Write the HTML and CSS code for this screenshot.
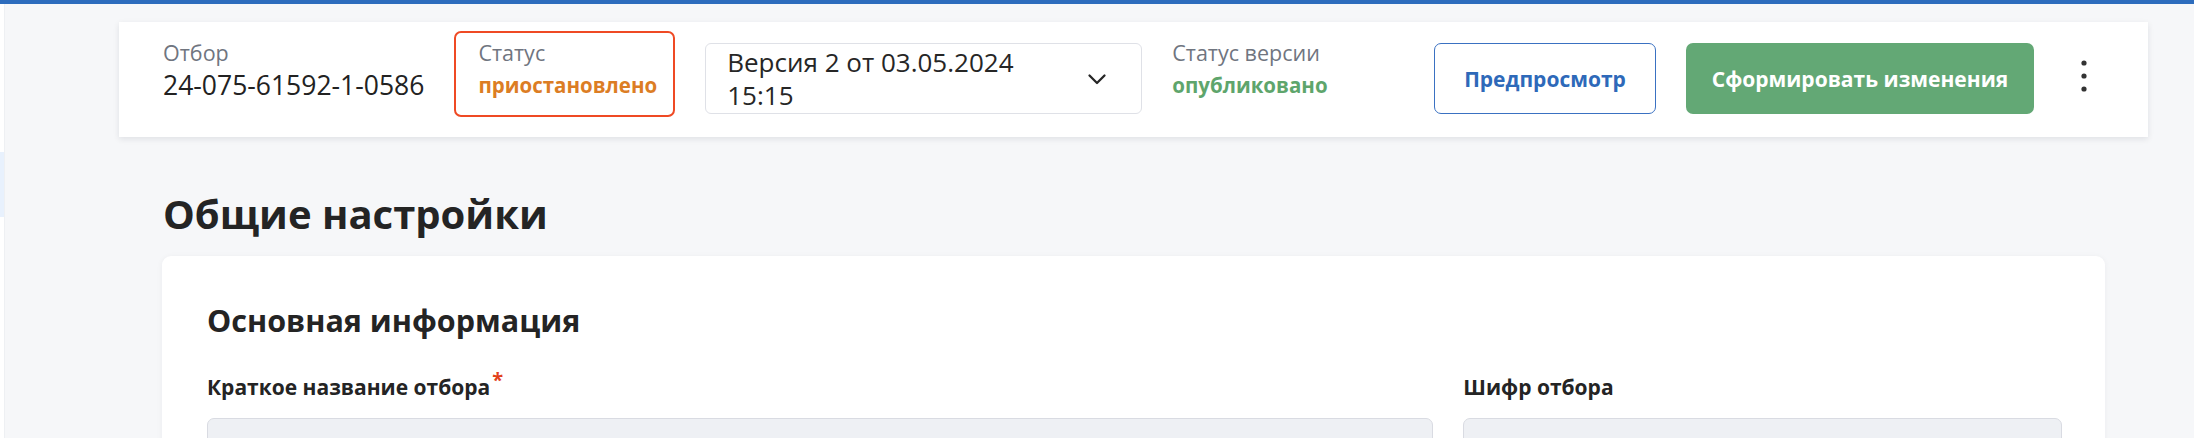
FILE: index.html
```html
<!DOCTYPE html>
<html lang="ru">
<head>
<meta charset="utf-8">
<link rel="stylesheet" href="styles.css">
</head>
<body>
<div class="topbar"></div>
<div class="layout">
  <aside class="sidebar"><div class="side-active"></div></aside>
  <main class="main">
    <div class="header-card">
      <div class="field">
        <div class="field-label">Отбор</div>
        <div class="field-value">24-075-61592-1-0586</div>
      </div>
      <div class="field field-status">
        <div class="field-label">Статус</div>
        <div class="field-value status-orange">приостановлено</div>
      </div>
      <div class="select">
        <div class="select-text">Версия 2 от 03.05.2024 15:15</div>
        <svg class="chevron" width="24" height="24" viewBox="0 0 24 24"><path d="M4.5 8.5 L12 16 L19.5 8.5" fill="none" stroke="#262626" stroke-width="2.3" stroke-linecap="round" stroke-linejoin="round"/></svg>
      </div>
      <div class="field">
        <div class="field-label">Статус версии</div>
        <div class="field-value status-green">опубликовано</div>
      </div>
      <div class="spacer"></div>
      <button class="btn btn-outline">Предпросмотр</button>
      <button class="btn btn-green">Сформировать изменения</button>
      <button class="kebab" aria-label="Ещё">
        <svg width="10" height="40" viewBox="0 0 10 40"><circle cx="5" cy="7" r="2.6" fill="#333"/><circle cx="5" cy="20" r="2.6" fill="#333"/><circle cx="5" cy="33" r="2.6" fill="#333"/></svg>
      </button>
    </div>

    <section class="content">
      <h1 class="page-title">Общие настройки</h1>
      <div class="card">
        <h2 class="card-title">Основная информация</h2>
        <div class="form-grid">
          <div class="form-field">
            <label class="form-label">Краткое название отбора<span class="req">*</span></label>
            <div class="input"></div>
          </div>
          <div class="form-field">
            <label class="form-label">Шифр отбора</label>
            <div class="input"></div>
          </div>
        </div>
      </div>
    </section>
  </main>
</div>
</body>
</html>
```
FILE: styles.css
```css
* { box-sizing: border-box; }
html, body { margin: 0; padding: 0; }
body {
  background: #f6f7f9;
  font-family: "Open Sans", "Noto Sans", sans-serif;
  color: #262626;
  height: 438px;
  overflow: hidden;
}
.topbar {
  height: 4px;
  background: #2d6cbd;
}
.layout {
  display: flex;
  height: 434px;
}
.sidebar {
  width: 5px;
  background: #ffffff;
  border-right: 1px solid #eef0f3;
  padding-top: 148px;
  flex: none;
}
.side-active {
  height: 65px;
  background: #e8f1fd;
}
.main {
  flex: 1;
  padding: 18px 46px 0 114px;
}
.header-card {
  background: #ffffff;
  height: 115px;
  display: flex;
  align-items: flex-start;
  gap: 30px;
  padding: 21px 44px 0;
  box-shadow: 0 2px 6px rgba(20, 30, 50, 0.1);
}
.field {
  flex: none;
  margin-top: -5px;
}
.field-label {
  font-size: 21.5px;
  line-height: 29px;
  color: #70757f;
}
.field-value {
  font-size: 26.5px;
  line-height: 37px;
  color: #222;
}
.status-orange, .status-green {
  font-size: 20.5px;
  font-weight: 700;
  margin-top: 3px;
  line-height: 30px;
}
.status-orange { color: #dc7d24; }
.status-green { color: #5ea56c; }
.field-status {
  border: 2px solid #ef4a24;
  border-radius: 7px;
  padding: 5px 16px 15px 22px;
  margin-top: -12px;
}
.select {
  flex: none;
  width: 437px;
  height: 71px;
  border: 1px solid #dfe1e7;
  border-radius: 6px;
  display: flex;
  align-items: center;
  padding: 0 32px 0 21px;
}
.select-text {
  width: 320px;
  font-size: 26px;
  line-height: 33px;
  color: #262626;
}
.chevron { margin-left: auto; }
.spacer { flex: 1; }
.btn {
  flex: none;
  height: 71px;
  border-radius: 7px;
  font-family: inherit;
  font-size: 21px;
  font-weight: 700;
  padding: 0;
  cursor: pointer;
}
.btn-outline {
  width: 222px;
  background: #fff;
  border: 1px solid #3a71c2;
  color: #2e69b9;
}
.btn-green {
  width: 348px;
  background: #63a875;
  border: none;
  color: #fff;
}
.kebab {
  flex: none;
  width: 40px;
  height: 66px;
  border: none;
  background: none;
  padding: 0;
  display: flex;
  align-items: center;
  justify-content: center;
}
.content {
  padding: 0 43px;
}
.page-title {
  margin: 51px 0 16px 1px;
  font-size: 40px;
  line-height: 52px;
  font-weight: 700;
  color: #242424;
}
.card {
  background: #fff;
  border-radius: 9px;
  padding: 45px 43px 0 45px;
  height: 300px;
  box-shadow: 0 1px 6px rgba(20, 30, 50, 0.05);
}
.card-title {
  margin: 0;
  font-size: 30.5px;
  line-height: 38px;
  font-weight: 700;
  color: #242424;
}
.form-grid {
  display: grid;
  grid-template-columns: 1227fr 599fr;
  column-gap: 30px;
  margin-top: 34px;
}
.form-label {
  display: block;
  font-size: 21px;
  line-height: 28px;
  font-weight: 700;
  color: #242424;
}
.req {
  color: #e2421c;
  font-size: 20px;
  vertical-align: super;
  line-height: 0;
  margin-left: 2px;
}
.input {
  margin-top: 17px;
  height: 56px;
  background: #eef0f4;
  border: 1px solid #d9dbe2;
  border-radius: 7px;
}
```
